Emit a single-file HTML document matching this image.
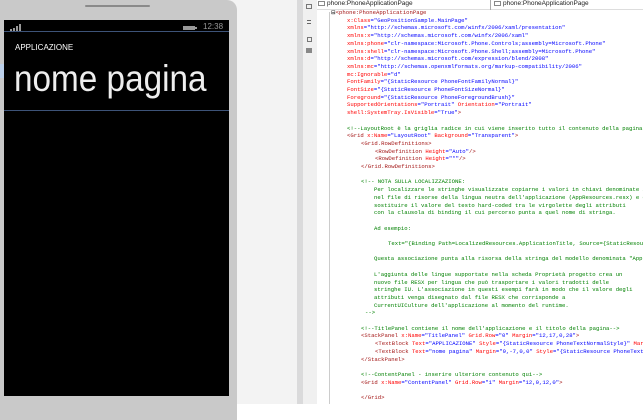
<!DOCTYPE html>
<html><head><meta charset="utf-8"><style>
*{margin:0;padding:0;box-sizing:border-box}
body{width:643px;height:404px;overflow:hidden;position:relative;background:#fff;font-family:"Liberation Sans",sans-serif}
.a{position:absolute}
.code{position:absolute;left:0;top:0;width:643px;height:404px;overflow:hidden;font-family:"Liberation Mono",monospace;font-size:5.6px;white-space:pre;line-height:7.7px}
.code div{position:absolute;height:7.7px}
.t{color:#a31515}.r{color:#ff0000}.b{color:#0000ff}.g{color:#008000}
</style></head><body>
<div class="a" style="left:0;top:0;width:298px;height:404px;background:#f3f3f3"></div>
<div class="a" style="left:-6px;top:0;width:243px;height:420px;background:#c9c9c9;border-radius:0 10px 0 0"></div>
<div class="a" style="left:85px;top:5px;width:65px;height:2px;background:#8a8a8a;border-radius:1px"></div>
<div class="a" style="left:4px;top:20px;width:225px;height:376px;background:#000"></div>
<div class="a" style="left:4px;top:31px;width:225px;height:1px;background:#3d5378"></div>
<div class="a" style="left:4px;top:110px;width:225px;height:1px;background:#3d5378"></div>
<div class="a" style="left:0;top:64px;width:4px;height:14px;background:#bcd0ea"></div>
<div class="a" style="left:10px;top:29px;width:2px;height:2px;background:#999"></div>
<div class="a" style="left:13px;top:28px;width:2px;height:3px;background:#999"></div>
<div class="a" style="left:16px;top:26px;width:2px;height:5px;background:#999"></div>
<div class="a" style="left:19px;top:24px;width:2px;height:7px;background:#999"></div>
<div class="a" style="left:183px;top:26px;width:12px;height:4px;background:#999"></div>
<div class="a" style="left:195px;top:27px;width:2px;height:2px;background:#999"></div>
<div class="a" style="left:203px;top:22px;font-size:8px;color:#999">12:38</div>
<div class="a" style="left:15px;top:43px;font-size:8px;color:#fff">APPLICAZIONE</div>
<div class="a" style="left:14px;top:58px;font-size:37px;color:#eee;transform:scaleX(0.9);transform-origin:left;white-space:nowrap">nome pagina</div>
<div class="a" style="left:297px;top:0;width:6px;height:404px;background:#dadadb"></div>
<div class="a" style="left:303px;top:0;width:14px;height:404px;background:#f0f0f0"></div>
<div class="a" style="left:306px;top:4px;width:6px;height:5px;border:1px solid #777"></div>
<div class="a" style="left:307px;top:20px;width:4px;height:4px;border-top:1px solid #666;border-bottom:1px solid #666"></div>
<div class="a" style="left:307px;top:37px;width:5px;height:5px;border:1px solid #777"></div>
<div class="a" style="left:306px;top:48px;width:6px;height:5px;background:#888"></div>
<div class="a" style="left:329px;top:12px;width:1px;height:392px;background:#ccc"></div>
<div class="a" style="left:317px;top:0;width:326px;height:10px;background:#fff;border-bottom:1px solid #ddd"></div>
<div class="a" style="left:318px;top:1px;width:7px;height:5px;border:1px solid #888"></div>
<div class="a" style="left:327px;top:0;font-size:6.5px;color:#222">phone:PhoneApplicationPage</div>
<div class="a" style="left:490px;top:0;width:1px;height:10px;background:#aaa"></div>
<div class="a" style="left:494px;top:1px;width:7px;height:5px;border:1px solid #888"></div>
<div class="a" style="left:503px;top:0;font-size:6.5px;color:#222">phone:PhoneApplicationPage</div>
<div class="code">
<div style="top:9px;left:331px">⊟<span class="t">&lt;phone:PhoneApplicationPage</span></div>
<div style="top:16.7px;left:347px"><span class="r">x:Class</span><span class="b">="GeoPositionSample.MainPage"</span></div>
<div style="top:24.4px;left:347px"><span class="r">xmlns</span><span class="b">="http://schemas.microsoft.com/winfx/2006/xaml/presentation"</span></div>
<div style="top:32.1px;left:347px"><span class="r">xmlns:x</span><span class="b">="http://schemas.microsoft.com/winfx/2006/xaml"</span></div>
<div style="top:39.8px;left:347px"><span class="r">xmlns:phone</span><span class="b">="clr-namespace:Microsoft.Phone.Controls;assembly=Microsoft.Phone"</span></div>
<div style="top:47.5px;left:347px"><span class="r">xmlns:shell</span><span class="b">="clr-namespace:Microsoft.Phone.Shell;assembly=Microsoft.Phone"</span></div>
<div style="top:55.2px;left:347px"><span class="r">xmlns:d</span><span class="b">="http://schemas.microsoft.com/expression/blend/2008"</span></div>
<div style="top:62.9px;left:347px"><span class="r">xmlns:mc</span><span class="b">="http://schemas.openxmlformats.org/markup-compatibility/2006"</span></div>
<div style="top:70.6px;left:347px"><span class="r">mc:Ignorable</span><span class="b">="d"</span></div>
<div style="top:78.3px;left:347px"><span class="r">FontFamily</span><span class="b">="{StaticResource PhoneFontFamilyNormal}"</span></div>
<div style="top:86px;left:347px"><span class="r">FontSize</span><span class="b">="{StaticResource PhoneFontSizeNormal}"</span></div>
<div style="top:93.7px;left:347px"><span class="r">Foreground</span><span class="b">="{StaticResource PhoneForegroundBrush}"</span></div>
<div style="top:101.4px;left:347px"><span class="r">SupportedOrientations</span><span class="b">="Portrait"</span> <span class="r">Orientation</span><span class="b">="Portrait"</span></div>
<div style="top:109.1px;left:347px"><span class="r">shell:SystemTray.IsVisible</span><span class="b">="True"</span><span class="t">&gt;</span></div>
<div style="top:124.5px;left:347px" class="g">&lt;!--LayoutRoot è la griglia radice in cui viene inserito tutto il contenuto della pagina--&gt;</div>
<div style="top:132.2px;left:347px"><span class="t">&lt;Grid</span> <span class="r">x:Name</span><span class="b">="LayoutRoot"</span> <span class="r">Background</span><span class="b">="Transparent"</span><span class="t">&gt;</span></div>
<div style="top:139.9px;left:361px"><span class="t">&lt;Grid.RowDefinitions&gt;</span></div>
<div style="top:147.6px;left:375px"><span class="t">&lt;RowDefinition</span> <span class="r">Height</span><span class="b">="Auto"</span><span class="t">/&gt;</span></div>
<div style="top:155.3px;left:375px"><span class="t">&lt;RowDefinition</span> <span class="r">Height</span><span class="b">="*"</span><span class="t">/&gt;</span></div>
<div style="top:163px;left:361px"><span class="t">&lt;/Grid.RowDefinitions&gt;</span></div>
<div style="top:178.4px;left:361px" class="g">&lt;!-- NOTA SULLA LOCALIZZAZIONE:</div>
<div style="top:186.1px;left:374px" class="g">Per localizzare le stringhe visualizzate copiarne i valori in chiavi denominate in modo appropriato</div>
<div style="top:193.8px;left:374px" class="g">nel file di risorse della lingua neutra dell'applicazione (AppResources.resx) e quindi</div>
<div style="top:201.5px;left:374px" class="g">sostituire il valore del testo hard-coded tra le virgolette degli attributi</div>
<div style="top:209.2px;left:374px" class="g">con la clausola di binding il cui percorso punta a quel nome di stringa.</div>
<div style="top:224.6px;left:374px" class="g">Ad esempio:</div>
<div style="top:240px;left:388px" class="g">Text="{Binding Path=LocalizedResources.ApplicationTitle, Source={StaticResource LocalizedStrings}}"</div>
<div style="top:255.4px;left:374px" class="g">Questa associazione punta alla risorsa della stringa del modello denominata "ApplicationTitle".</div>
<div style="top:270.8px;left:374px" class="g">L'aggiunta delle lingue supportate nella scheda Proprietà progetto crea un</div>
<div style="top:278.5px;left:374px" class="g">nuovo file RESX per lingua che può trasportare i valori tradotti delle</div>
<div style="top:286.2px;left:374px" class="g">stringhe IU. L'associazione in questi esempi farà in modo che il valore degli</div>
<div style="top:293.9px;left:374px" class="g">attributi venga disegnato dal file RESX che corrisponde a</div>
<div style="top:301.6px;left:374px" class="g">CurrentUICulture dell'applicazione al momento del runtime.</div>
<div style="top:309.3px;left:365px" class="g">--&gt;</div>
<div style="top:324.7px;left:361px" class="g">&lt;!--TitlePanel contiene il nome dell'applicazione e il titolo della pagina--&gt;</div>
<div style="top:332.4px;left:361px"><span class="t">&lt;StackPanel</span> <span class="r">x:Name</span><span class="b">="TitlePanel"</span> <span class="r">Grid.Row</span><span class="b">="0"</span> <span class="r">Margin</span><span class="b">="12,17,0,28"</span><span class="t">&gt;</span></div>
<div style="top:340.1px;left:375px"><span class="t">&lt;TextBlock</span> <span class="r">Text</span><span class="b">="APPLICAZIONE"</span> <span class="r">Style</span><span class="b">="{StaticResource PhoneTextNormalStyle}"</span> <span class="r">Margin</span><span class="b">="12,0"</span><span class="t">/&gt;</span></div>
<div style="top:347.8px;left:375px"><span class="t">&lt;TextBlock</span> <span class="r">Text</span><span class="b">="nome pagina"</span> <span class="r">Margin</span><span class="b">="9,-7,0,0"</span> <span class="r">Style</span><span class="b">="{StaticResource PhoneTextTitle1Style}"</span><span class="t">/&gt;</span></div>
<div style="top:355.5px;left:361px"><span class="t">&lt;/StackPanel&gt;</span></div>
<div style="top:370.9px;left:361px" class="g">&lt;!--ContentPanel - inserire ulteriore contenuto qui--&gt;</div>
<div style="top:378.6px;left:361px"><span class="t">&lt;Grid</span> <span class="r">x:Name</span><span class="b">="ContentPanel"</span> <span class="r">Grid.Row</span><span class="b">="1"</span> <span class="r">Margin</span><span class="b">="12,0,12,0"</span><span class="t">&gt;</span></div>
<div style="top:394px;left:361px"><span class="t">&lt;/Grid&gt;</span></div>
</div>
</body></html>
